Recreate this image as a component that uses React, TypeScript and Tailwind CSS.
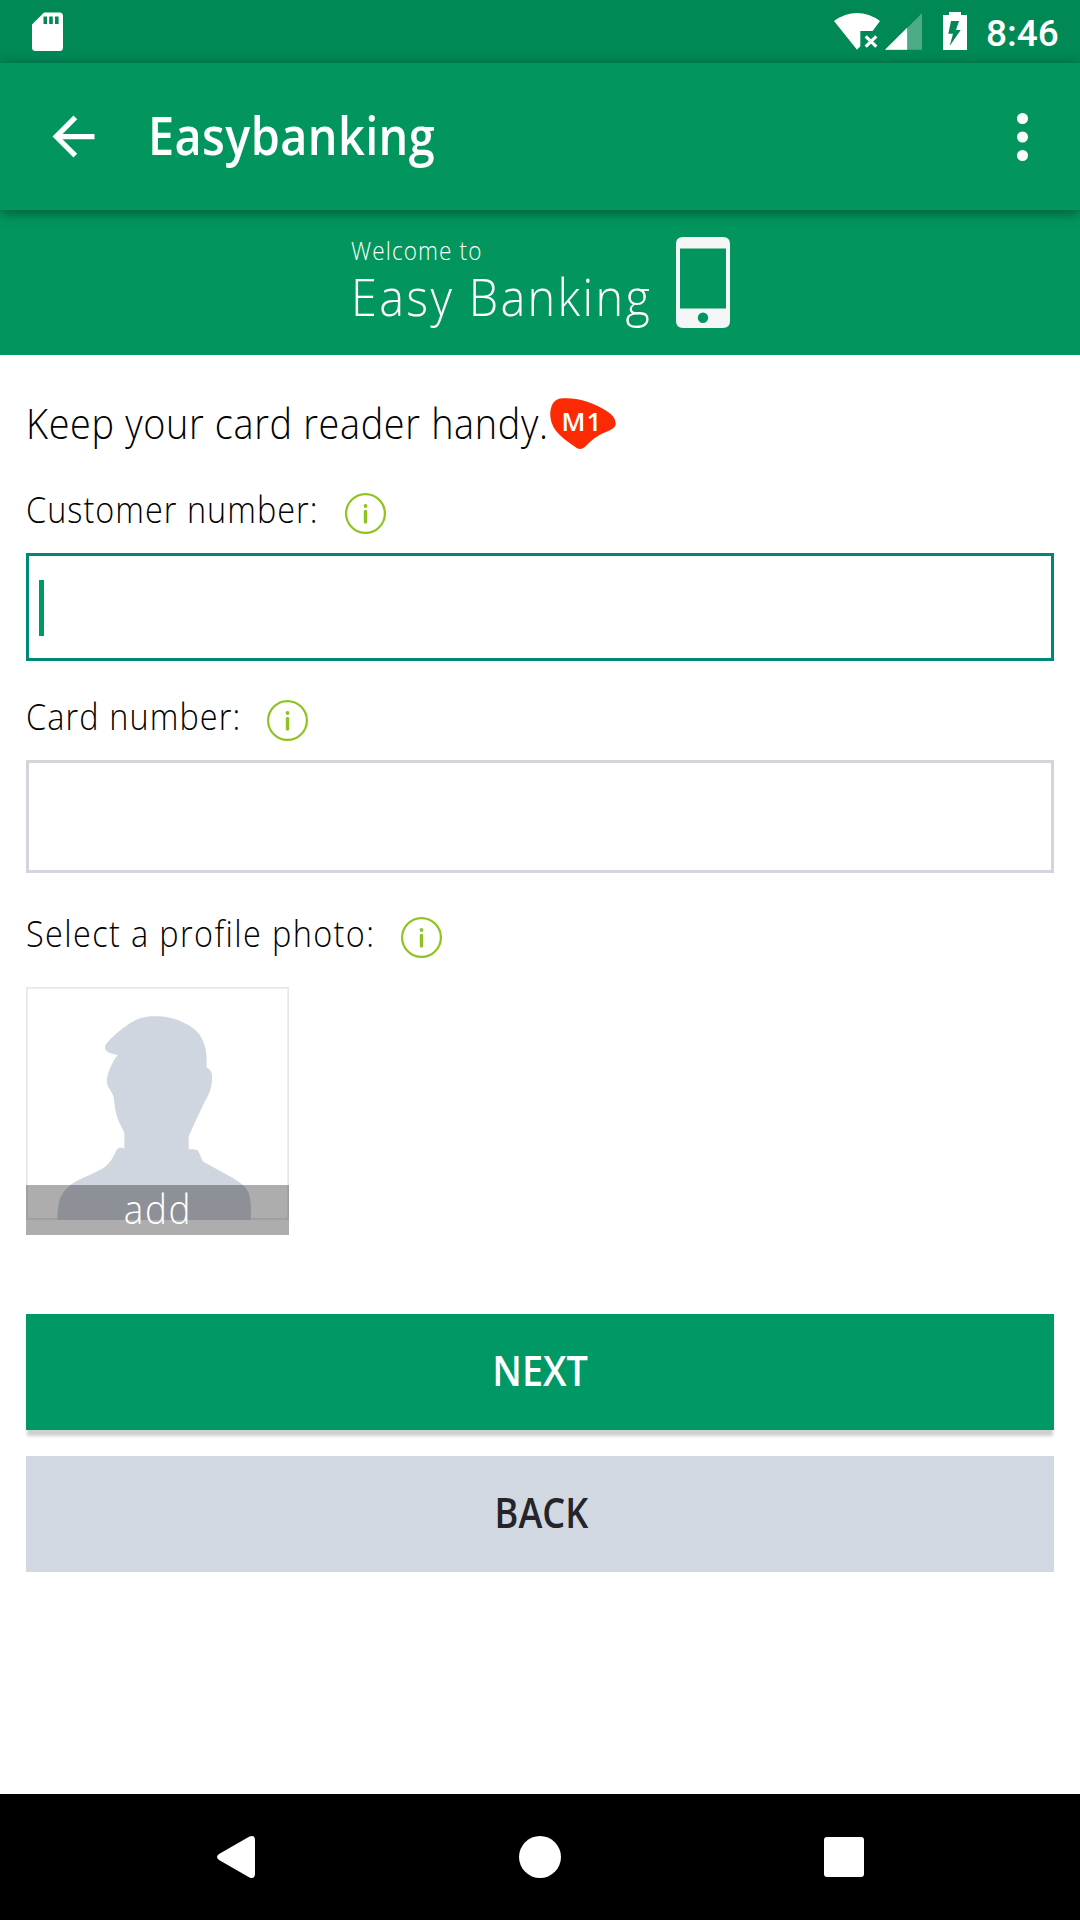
import type { ReactNode } from "react";

function StatusBar() {
  return (
    <div className="flex h-[63px] bg-[#008855]">
      <svg className="ml-[32px] mt-[12px] h-[39px] w-[31px]" viewBox="0 0 31 39" fill="#fff">
        <path
          fillRule="evenodd"
          d="M12 .5H27.500Q31 .5 31 4V35.500Q31 39 27.500 39H3.500Q0 39 0 35.500V12.500ZM11.500 4.500V12H15V4.500ZM17.200 4.500V12H20.800V4.500ZM23 4.500V12H26.600V4.500Z"
        />
      </svg>
      <div className="ml-auto flex">
        <svg className="mt-[13px] h-[37px] w-[46px]" viewBox="102 39 138 111">
          <path fill="#fff" d="M102 63Q135 39 171 39Q207 39 240 63L218 93H181V139L171 149Z" />
          <path stroke="#fff" strokeWidth="9.500" d="M197 109L229 140M229 109L197 140" />
        </svg>
        <svg className="ml-[5px] mt-[13px] h-[37px] w-[37px]" viewBox="254 38 112 111" fill="#fff">
          <path fillOpacity=".3" d="M254 149L366 38V149Z" />
          <path d="M254 149L321 82V149Z" />
        </svg>
        <svg className="ml-[21px] mt-[12px] h-[38px] w-[24px]" viewBox="429 36 72 114">
          <path fill="#fff" d="M447 36H483V45H501V150H429V45H447Z" />
          <path fill="#008855" d="M453 63H477L468 90H482L449 138L459 101H445Z" />
        </svg>
        <span className="ml-[19px] w-[94px] pt-1 font-['Roboto',sans-serif] text-[37px] font-medium leading-[59px] text-white">
          8:46
        </span>
      </div>
    </div>
  );
}

function AppBar() {
  return (
    <header className="relative z-10 flex h-[147px] items-center bg-[#02965e] pl-[42px] pr-[52px] text-white shadow-[0_3px_12px_rgba(0,0,0,0.42)]">
      <svg className="size-[63px]" viewBox="0 0 24 24" fill="currentColor">
        <path d="M20 11H7.830l5.590-5.590L12 4l-8 8 8 8 1.410-1.410L7.830 13H20v-2z" />
      </svg>
      <h1 className="ml-[43px] origin-left scale-x-90 pb-[4px] text-[52px] font-semibold tracking-[0.450px]">
        Easybanking
      </h1>
      <svg className="ml-auto h-[48px] w-[11px]" viewBox="0 0 11 48" fill="currentColor">
        <circle cx="5.500" cy="5.500" r="5.500" />
        <circle cx="5.500" cy="24" r="5.500" />
        <circle cx="5.500" cy="42.500" r="5.500" />
      </svg>
    </header>
  );
}

function Banner() {
  return (
    <section className="flex h-[145px] justify-center bg-[#02965e] text-white">
      <div className="w-[325px] whitespace-nowrap pt-[24px] font-[330]">
        <p className="origin-left scale-x-90 text-[25px] leading-[32px] tracking-[1.250px]">Welcome to</p>
        <p className="mt-[2px] origin-left scale-x-90 text-[52px] leading-[56px] tracking-[2.600px]">
          Easy Banking
        </p>
      </div>
      <svg className="mt-[27px] h-[91px] w-[54px]" viewBox="0 0 54 91">
        <path
          fill="#f3f5f7"
          fillRule="evenodd"
          d="M7 0H47Q54 0 54 7V84Q54 91 47 91H7Q0 91 0 84V7Q0 0 7 0ZM4 11.500V71.500H50V11.500ZM27 75.500A5.200 5.200 0 1 0 27 85.900A5.200 5.200 0 1 0 27 75.500Z"
        />
      </svg>
    </section>
  );
}

function InfoIcon() {
  return (
    <svg className="size-[41px]" viewBox="0 0 41 41" fill="none">
      <circle cx="20.500" cy="20.500" r="19.400" stroke="#8fc31f" strokeWidth="2.200" />
      <circle cx="20.500" cy="13" r="1.900" fill="#8fc31f" />
      <path d="M20.500 18.500V29" stroke="#8fc31f" strokeWidth="3.400" strokeLinecap="round" />
    </svg>
  );
}

function Label({ className, children }: { className: string; children: ReactNode }) {
  return (
    <div className="flex h-[41px]">
      <span
        className={`${className} origin-left scale-x-90 whitespace-nowrap text-[36px] font-[330] leading-[34px]`}
      >
        {children}
      </span>
      <InfoIcon />
    </div>
  );
}

function ReaderBadge() {
  return (
    <div className="relative mt-[4px] h-[51px] w-[66px]">
      <svg className="size-full" viewBox="62 54 198 153">
        <path
          fill="#fb2a05"
          d="M100 55C150 52 200 72 235 95C252 106 259 118 259 132C258 146 240 152 222 159C202 168 188 180 170 197C160 208 148 210 138 201C115 186 92 168 78 150C62 128 59 100 67 78C74 62 84 56 100 55Z"
        />
      </svg>
      <span className="absolute left-[11.500px] top-[4px] text-[26px] font-semibold leading-[38px] tracking-[1px] text-white">
        M1
      </span>
    </div>
  );
}

function ProfilePhoto() {
  return (
    <div className="relative h-[248px] w-[263px]">
      <svg className="h-[233px] w-[263px]" viewBox="78 81 789 699">
        <rect x="80.500" y="83.500" width="784" height="693" fill="#fff" stroke="#e6e7e8" strokeWidth="5" />
        <path
          fill="#d0d6df"
          d="M462 169C430 169 415 175 390 190C365 206 335 232 320 250C308 265 315 279 353 285C335 308 318 345 321 370C323 382 338 398 341 412C343 425 344 450 353 475C360 495 370 510 373 518L373 566C360 558 350 566 345 580C338 595 330 610 310 624C280 643 240 655 215 672C180 700 172 725 173 780L752 780C754 750 754 720 745 697C738 680 720 668 700 655L610 605C602 595 600 575 590 570C582 567 572 569 566 567L566 530C580 498 600 455 615 423C630 400 637 380 636 345C634 332 628 326 620 323C620 300 622 275 610 245C598 215 580 200 545 185C515 172 490 169 462 169Z"
        />
      </svg>
      <div className="absolute inset-x-0 bottom-0 flex h-[50px] items-center justify-center bg-black/32 pb-[2px] pl-px text-[41px] font-[330] tracking-[1.800px] text-white">
        <span className="scale-x-90">add</span>
      </div>
    </div>
  );
}

function NavBar() {
  return (
    <nav className="mt-auto flex h-[126px] items-center bg-black pl-[217px]">
      <svg className="h-[42px] w-[38px]" viewBox="0 0 38 42" fill="#fff">
        <path d="M32.500 .6Q38 -1.500 38 4.500V37.500Q38 43.500 32.500 41.400L2 24Q-2 21 2 18Z" />
      </svg>
      <div className="ml-[264px] size-[42px] rounded-full bg-white" />
      <div className="ml-[263px] size-[40px] rounded-[3px] bg-white" />
    </nav>
  );
}

export default function App() {
  return (
    <div className="flex h-[1920px] w-[1080px] flex-col bg-white font-['Open_Sans',sans-serif] text-black">
      <StatusBar />
      <AppBar />
      <Banner />
      <main className="px-[26px]">
        <div className="mt-[39px] flex h-[56px]">
          <p className="w-[524px] origin-left scale-x-90 whitespace-nowrap text-[42px] font-[330] leading-[57px] tracking-[0.740px]">
            Keep your card reader handy.
          </p>
          <ReaderBadge />
        </div>
        <div className="mt-[43px]">
          <Label className="w-[319px] tracking-[1.150px]">Customer number:</Label>
        </div>
        <div className="mt-[19px] flex h-[108px] items-center border-3 border-[#008877] pl-[10px]">
          <div className="mt-[2px] h-[56px] w-[5px] bg-[#009966]" />
        </div>
        <div className="mt-[39px]">
          <Label className="w-[241px] tracking-[1.250px]">Card number:</Label>
        </div>
        <div className="mt-[19px] h-[113px] border-3 border-[#d2d5db]" />
        <div className="mt-[44px]">
          <Label className="w-[375px] tracking-[1.550px]">Select a profile photo:</Label>
        </div>
        <div className="mt-[29px]">
          <ProfilePhoto />
        </div>
        <button className="mt-[79px] flex h-[116px] w-full items-center justify-center bg-[#009966] pb-[5px] text-[42px] font-semibold text-white shadow-[0_7px_3px_-1px_#cfcfcf]">
          <span className="scale-x-90">NEXT</span>
        </button>
        <button className="mt-[26px] flex h-[116px] w-full items-center justify-center bg-[#d1d8e2] pb-[5px] pl-[2px] text-[42px] font-semibold text-[#252529]">
          <span className="scale-x-[0.860]">BACK</span>
        </button>
      </main>
      <NavBar />
    </div>
  );
}
